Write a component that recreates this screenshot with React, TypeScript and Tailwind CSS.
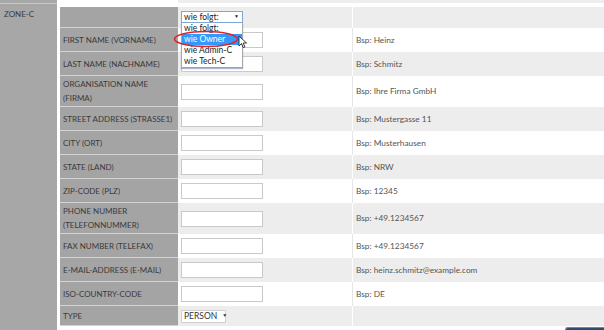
import React from "react";

type Row = { label: string[]; bsp?: string; h: string; kind: "input" | "select" | "header" };

const rows: Row[] = [
  { label: [], h: "h-[21px]", kind: "header" },
  { label: ["FIRST NAME (VORNAME)"], bsp: "Bsp: Heinz", h: "h-[24px]", kind: "input" },
  { label: ["LAST NAME (NACHNAME)"], bsp: "Bsp: Schmitz", h: "h-[24px]", kind: "input" },
  { label: ["ORGANISATION NAME", "(FIRMA)"], bsp: "Bsp: Ihre Firma GmbH", h: "h-[31px]", kind: "input" },
  { label: ["STREET ADDRESS (STRASSE1)"], bsp: "Bsp: Mustergasse 11", h: "h-[24px]", kind: "input" },
  { label: ["CITY (ORT)"], bsp: "Bsp: Musterhausen", h: "h-[24px]", kind: "input" },
  { label: ["STATE (LAND)"], bsp: "Bsp: NRW", h: "h-[24px]", kind: "input" },
  { label: ["ZIP-CODE (PLZ)"], bsp: "Bsp: 12345", h: "h-[24px]", kind: "input" },
  { label: ["PHONE NUMBER", "(TELEFONNUMMER)"], bsp: "Bsp: +49.1234567", h: "h-[31px]", kind: "input" },
  { label: ["FAX NUMBER (TELEFAX)"], bsp: "Bsp: +49.1234567", h: "h-[24px]", kind: "input" },
  { label: ["E-MAIL-ADDRESS (E-MAIL)"], bsp: "Bsp: heinz.schmitz@example.com", h: "h-[24px]", kind: "input" },
  { label: ["ISO-COUNTRY-CODE"], bsp: "Bsp: DE", h: "h-[24px]", kind: "input" },
  { label: ["TYPE"], h: "h-[20px]", kind: "select" },
];

export default function App() {
  return (
    <div className="relative w-[604px] h-[330px] overflow-hidden bg-white font-['Lato',sans-serif] text-[#3a3a3a]">
      <div className="flex">
        <div className="w-[57px] shrink-0 bg-[#a7a7a7] h-[330px]">
          <div className="h-[3px]" />
          <div className="h-[1px] bg-[#c9c9c9]" />
          <div className="pl-[4px] pt-[5px] text-[8px] leading-[10px] text-[#3a3a3a]">ZONE-C</div>
        </div>
        <div className="flex-1 ml-[3px]">
          <div className="flex h-[3px]">
            <div className="w-[118px] bg-white" />
            <div className="flex-1 bg-[#eeeeee]" />
          </div>
          <div className="h-[4px]" />
          {rows.map((r, i) => {
            const bg = i % 2 === 0 ? "bg-[#ededed]" : "bg-white";
            return (
              <div key={i} className={`flex ${r.h} ${bg}`}>
                <div className="w-[118px] shrink-0 bg-[#a4a4a4] border-b border-[#d2d2d2] flex flex-col justify-center pl-[3px] text-[8px] leading-[14px] text-[#3a3a3a] whitespace-nowrap">
                  {r.label.map((l, j) => (
                    <div key={j}>{l}</div>
                  ))}
                </div>
                <div className="w-[174px] shrink-0 flex items-center pl-[3px]">
                  {r.kind === "input" && (
                    <div className="w-[82px] h-[16px] bg-white border border-[#c9c9c9]" />
                  )}
                  {r.kind === "select" && (
                    <div className="w-[45px] h-[13px] bg-white border border-[#cfcfcf] rounded-[1px] flex items-center pl-[2px] gap-[5px] text-[8.5px] text-[#333]">
                      <span>PERSON</span>
                      <span className="text-[5px]">▼</span>
                    </div>
                  )}
                </div>
                <div className={`flex-1 flex items-center pl-[3px] border-l ${i % 2 === 0 ? "border-white" : "border-[#e6e6e6]"} text-[8.3px] text-[#555]`}>
                  {r.bsp}
                </div>
              </div>
            );
          })}
          <div className="flex justify-end pr-0 pt-[1px]">
            <div className="w-[39px] h-[10px] bg-[#34496a] rounded-tl-[3px] border-t border-l border-[#6f86a6]" />
          </div>
        </div>
      </div>

      {/* open select dropdown */}
      <div className="absolute left-[181px] top-[11px] w-[62px]">
        <div className="h-[12px] bg-white border border-[#7fa6d6] flex items-center justify-between pl-[2px] pr-[3px] text-[8.5px] text-[#222]">
          <span>wie folgt:</span>
          <span className="text-[5px]">▼</span>
        </div>
        <div className="bg-white border border-[#a9a9a9] border-t-0 border-b-[#8fa3c3] shadow-[0_1px_1px_rgba(90,110,160,0.5)] text-[8.5px] leading-[11px] text-[#222]">
          <div className="pl-[2px] h-[11px]">wie folgt:</div>
          <div className="pl-[2px] h-[11px] bg-[#3399ff] text-white">wie Owner</div>
          <div className="pl-[2px] h-[11px]">wie Admin-C</div>
          <div className="pl-[2px] h-[11px]">wie Tech-C</div>
        </div>
      </div>

      {/* red circle annotation */}
      <svg className="absolute left-[172px] top-[29px]" width="70" height="22" viewBox="0 0 70 22">
        <ellipse cx="34" cy="10" rx="31.5" ry="7.5" fill="none" stroke="#e02424" strokeWidth="1.6" />
      </svg>

      {/* mouse cursor */}
      <svg className="absolute left-[238px] top-[35px]" width="10" height="14" viewBox="0 0 10 14">
        <path d="M1 1 L1 11 L3.5 8.6 L5.3 12.6 L6.9 11.9 L5.2 8 L8.5 8 Z" fill="white" stroke="#222" strokeWidth="0.9" strokeLinejoin="round" />
      </svg>
    </div>
  );
}
